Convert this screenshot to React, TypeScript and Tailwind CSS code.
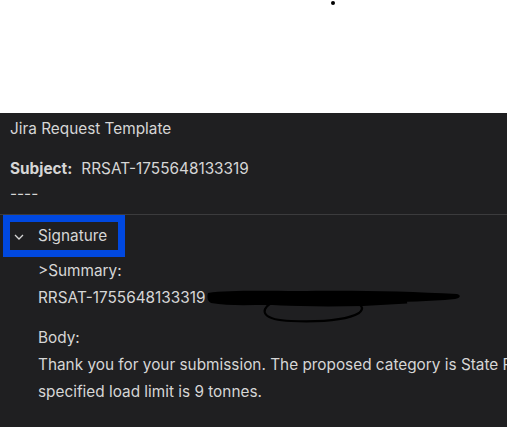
import React from 'react'

function Scribble() {
  return (
    <svg
      className="absolute left-[2px] top-[-6px]"
      width="256"
      height="44"
      viewBox="0 0 256 44"
      fill="none"
    >
      <path
        d="M1 10 C20 7 60 8 90 8 C140 7 200 8 250 11 C254 12 254 15 248 16 C220 19 200 18 170 20 C130 23 90 22 60 22 C40 22 20 23 4 20 C0 18 0 13 1 10 Z"
        fill="#000"
      />
      <path
        d="M64 20 C52 28 56 37 84 38 C112 39 140 37 152 30 C158 25 154 20 146 20"
        stroke="#000"
        strokeWidth="2.2"
      />
      <path d="M10 15 C60 20 120 24 200 18" stroke="#000" strokeWidth="5" />
    </svg>
  )
}

export default function App() {
  return (
    <div className="w-[507px] h-[427px] overflow-hidden bg-white font-['Inter','Noto_Sans',sans-serif] text-[15.35px]">
      <div className="h-[113px] relative">
        <span className="absolute left-[331px] top-[1px] w-[4px] h-[4px] rounded-full bg-black" />
      </div>
      <div className="h-[314px] bg-[#1f1f21] text-[#d6d6d6]">
        <div className="px-[10px] pt-[4px]">
          <p className="leading-[24px]">Jira Request Template</p>
          <p className="mt-[16px] leading-[24px]">
            <span className="font-bold">Subject:</span>
            <span className="ml-[9px]">RRSAT-1755648133319</span>
          </p>
          <p className="leading-[24px] mt-[1px]">----</p>
        </div>
        <div className="mt-[8px] border-t border-[#3b3b3d]" />
        <div className="pl-[3px]">
          <div className="inline-flex items-center gap-[14px] border-[7px] border-[#0048e0] w-[122px] h-[42px] pl-[4px]">
            <svg width="10" height="10" viewBox="0 0 10 10" fill="none" className="mt-[2px]">
              <path d="M1 3 L5 7 L9 3" stroke="#d6d6d6" strokeWidth="1.3" />
            </svg>
            <span className="leading-[24px]">Signature</span>
          </div>
        </div>
        <div className="pl-[38px] whitespace-nowrap">
          <p className="leading-[27px]">&gt;Summary:</p>
          <p className="leading-[27px]">
            RRSAT-1755648133319
            <span className="relative inline-block w-[250px] h-[20px] align-middle">
              <Scribble />
            </span>
          </p>
          <p className="leading-[27px] mt-[13px]">Body:</p>
          <p className="leading-[27px]">
            Thank you for your submission. The proposed category is State Road. The
          </p>
          <p className="leading-[27px]">specified load limit is 9 tonnes.</p>
        </div>
      </div>
    </div>
  )
}
